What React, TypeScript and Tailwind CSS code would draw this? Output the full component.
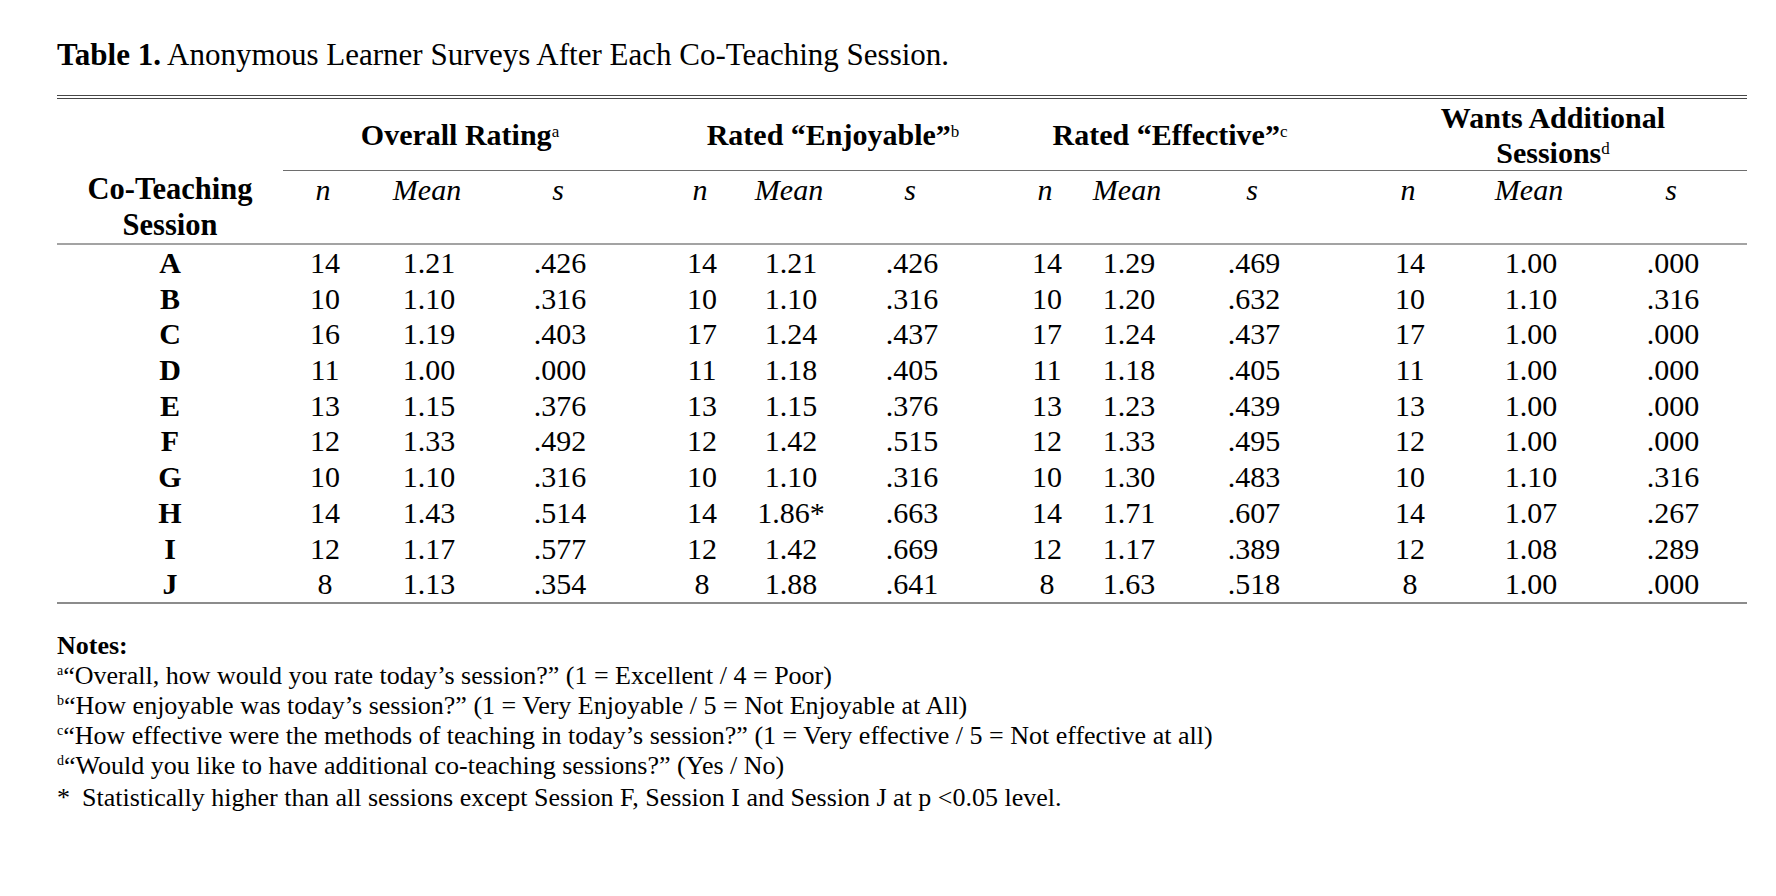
import React from 'react';

// Table 1 — learner surveys after each co-teaching session

type Row = { session: string; cells: string[] };

const ROWS: Row[] = [
  { session: 'A', cells: ['14', '1.21', '.426', '14', '1.21', '.426', '14', '1.29', '.469', '14', '1.00', '.000'] },
  { session: 'B', cells: ['10', '1.10', '.316', '10', '1.10', '.316', '10', '1.20', '.632', '10', '1.10', '.316'] },
  { session: 'C', cells: ['16', '1.19', '.403', '17', '1.24', '.437', '17', '1.24', '.437', '17', '1.00', '.000'] },
  { session: 'D', cells: ['11', '1.00', '.000', '11', '1.18', '.405', '11', '1.18', '.405', '11', '1.00', '.000'] },
  { session: 'E', cells: ['13', '1.15', '.376', '13', '1.15', '.376', '13', '1.23', '.439', '13', '1.00', '.000'] },
  { session: 'F', cells: ['12', '1.33', '.492', '12', '1.42', '.515', '12', '1.33', '.495', '12', '1.00', '.000'] },
  { session: 'G', cells: ['10', '1.10', '.316', '10', '1.10', '.316', '10', '1.30', '.483', '10', '1.10', '.316'] },
  { session: 'H', cells: ['14', '1.43', '.514', '14', '1.86*', '.663', '14', '1.71', '.607', '14', '1.07', '.267'] },
  { session: 'I', cells: ['12', '1.17', '.577', '12', '1.42', '.669', '12', '1.17', '.389', '12', '1.08', '.289'] },
  { session: 'J', cells: ['8', '1.13', '.354', '8', '1.88', '.641', '8', '1.63', '.518', '8', '1.00', '.000'] },
];

// left margin before each of the 12 value columns (cells are 80px wide, centred)
const GAPS = [
  'ml-[2px]', 'ml-[24px]', 'ml-[51px]',
  'ml-[62px]', 'ml-[9px]', 'ml-[41px]',
  'ml-[55px]', 'ml-[2px]', 'ml-[45px]',
  'ml-[76px]', 'ml-[41px]', 'ml-[62px]',
];

const SUBHEADS = ['n', 'Mean', 's', 'n', 'Mean', 's', 'n', 'Mean', 's', 'n', 'Mean', 's'];

function Sup({ children }: { children: React.ReactNode }) {
  return <sup className="text-[17px] font-normal">{children}</sup>;
}

function NoteSup({ children }: { children: React.ReactNode }) {
  return <sup className="text-[14px] -top-[9px]">{children}</sup>;
}

export default function App() {
  return (
    <div className="min-h-screen w-full bg-white pt-[37px] pl-[57px] font-['Liberation_Serif',serif] text-black">
      <h1 className="text-[31px] leading-[35px]">
        <b>Table 1.</b> Anonymous Learner Surveys After Each Co-Teaching Session.
      </h1>

      <div className="mt-[23px] w-[1690px] border-t-[4px] border-double border-[#474747]">
        {/* header */}
        <div className="flex border-b-2 border-[#a3a3a3]">
          <div className="flex w-[226px] shrink-0 flex-col justify-end text-center text-[30.5px] font-bold leading-[36px]">
            <div>Co-Teaching</div>
            <div>Session</div>
          </div>
          <div className="flex flex-1 flex-col">
            <div className="flex h-[72px] items-center border-b-[1.5px] border-[#6e6e6e] text-[30px] font-bold leading-[35px]">
              <div className="w-[354px] text-center">
                Overall Rating<Sup>a</Sup>
              </div>
              <div className="w-[392px] text-center">
                Rated “Enjoyable”<Sup>b</Sup>
              </div>
              <div className="w-[282px] text-center">
                Rated “Effective”<Sup>c</Sup>
              </div>
              <div className="ml-[48px] w-[388px] text-center">
                Wants Additional
                <br />
                Sessions<Sup>d</Sup>
              </div>
            </div>
            <div className="flex h-[72px] items-start text-[30px] italic leading-[37px]">
              {SUBHEADS.map((h, i) => (
                <div key={i} className={`w-[80px] shrink-0 text-center ${i === 0 ? 'ml-0' : GAPS[i]}`}>
                  {h}
                </div>
              ))}
            </div>
          </div>
        </div>

        {/* body */}
        <div className="border-b-2 border-[#8c8c8c]">
          {ROWS.map((r) => (
            <div key={r.session} className="flex h-[35.7px] items-center text-[30px] leading-[35.7px]">
              <div className="w-[226px] shrink-0 text-center font-bold">{r.session}</div>
              {r.cells.map((c, i) => (
                <div key={i} className={`flex w-[80px] shrink-0 justify-center whitespace-nowrap ${GAPS[i]}`}>
                  {c}
                </div>
              ))}
            </div>
          ))}
        </div>
      </div>

      {/* notes */}
      <div className="mt-[27px] text-[26px] leading-[30px]">
        <div className="font-bold">Notes:</div>
        <div>
          <NoteSup>a</NoteSup>“Overall, how would you rate today’s session?” (1 = Excellent / 4 = Poor)
        </div>
        <div>
          <NoteSup>b</NoteSup>“How enjoyable was today’s session?” (1 = Very Enjoyable / 5 = Not Enjoyable at All)
        </div>
        <div>
          <NoteSup>c</NoteSup>“How effective were the methods of teaching in today’s session?” (1 = Very effective / 5 = Not
          effective at all)
        </div>
        <div>
          <NoteSup>d</NoteSup>“Would you like to have additional co-teaching sessions?” (Yes / No)
        </div>
        <div className="mt-[2px] flex">
          <span className="w-[25px]">*</span>
          <span>Statistically higher than all sessions except Session F, Session I and Session J at p &lt;0.05 level.</span>
        </div>
      </div>
    </div>
  );
}
